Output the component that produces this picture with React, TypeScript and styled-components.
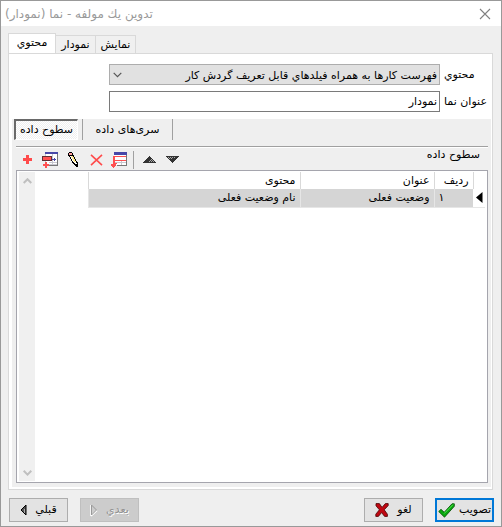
import React from "react";
import styled, { createGlobalStyle, css } from "styled-components";

const Global = createGlobalStyle`
  *, *::before, *::after { box-sizing: border-box; }
  html, body { margin: 0; padding: 0; background: #efefef; }
  button, input, select { font: inherit; color: inherit; margin: 0; border-radius: 0; }
`;

const Dialog = styled.main`
  display: flex;
  flex-direction: column;
  min-height: 100vh;
  border: 1px solid #999;
  background: #efefef;
  color: #000;
  font-family: "DejaVu Sans", Tahoma, sans-serif;
  font-size: 11px;
  line-height: 16px;
`;

const TitleBar = styled.header`
  display: flex;
  align-items: center;
  justify-content: space-between;
  height: 25px;
  padding: 0 8px 0 4px;
  background: #fff;
  color: #999;
`;

const Title = styled.h1`
  margin: 0;
  font-size: 12px;
  font-weight: 400;
`;

const CloseButton = styled.button`
  display: flex;
  padding: 2px;
  border: 0;
  background: none;
`;

const Tabs = styled.div`
  display: flex;
  align-items: flex-end;
  height: 27px;
  padding-left: 7px;
`;

const Tab = styled.button<{ $active?: boolean }>`
  width: 40px;
  height: 18px;
  padding: 0;
  border: 1px solid #d9d9d9;
  border-width: 1px 1px 0 0;
  background: #f0f0f0;
  white-space: nowrap;
  ${(p) =>
    p.$active &&
    css`
      width: 48px;
      height: 21px;
      padding-bottom: 3px;
      border-left-width: 1px;
      margin-bottom: -1px;
      background: #fff;
    `}
`;

const Page = styled.section`
  display: flex;
  flex: 1;
  flex-direction: column;
  margin: 0 8px 0 7px;
  padding: 10px 1px 2px 3px;
  border: 1px solid #d9d9d9;
  background: #fff;
`;

const Fields = styled.div`
  display: grid;
  grid-template-columns: 1fr 45px;
  gap: 6px 4px;
  margin: 0 2px 7px 97px;
`;

const Label = styled.label`
  align-self: center;
  white-space: nowrap;
`;

const Select = styled.select`
  width: 100%;
  height: 21px;
  padding: 2px 2px 0;
  appearance: none;
  border: 1px solid #adadad;
  background: #e1e1e1;
`;

const SelectBox = styled.div`
  position: relative;
  display: flex;
  svg {
    position: absolute;
    left: 4px;
    top: 8px;
    pointer-events: none;
  }
`;

const Input = styled.input`
  width: 100%;
  height: 21px;
  padding: 0 2px;
  border: 1px solid #7a7a7a;
  background: #fff;
`;

const Panel = styled.div`
  display: flex;
  flex: 1;
  flex-direction: column;
  padding: 0 3px 4px 4px;
  background: #efefef;
`;

const LevelTabs = styled.div`
  display: flex;
  height: 27px;
  margin-left: -2px;
`;

const LevelTab = styled.button<{ $pressed?: boolean }>`
  height: 21px;
  width: 90px;
  padding: 0;
  border: 0;
  border-right: 1px solid #a0a0a0;
  background: none;
  white-space: nowrap;
  ${(p) =>
    p.$pressed &&
    css`
      width: 64px;
      margin-right: 4px;
      border: 1px solid #fff;
      border-top: 2px solid #696969;
      border-left: 2px solid #696969;
      background: repeating-conic-gradient(#fff 0 25%, #efefef 0 50%) 0 0 / 2px 2px;
    `}
`;

const Divider = styled.span<{ $height: number }>`
  width: 1px;
  height: ${(p) => p.$height}px;
  background: #a0a0a0;
`;

const ToolRow = styled.div`
  display: flex;
  justify-content: space-between;
  height: 24px;
  padding-right: 8px;
  border-top: 1px solid #a0a0a0;
  box-shadow: inset 0 1px #fff;
`;

const Tools = styled.div`
  display: flex;
  align-items: center;
  padding-top: 2px;
`;

const ToolGroup = styled.div`
  display: flex;
  margin-right: 2px;
`;

const MoveGroup = styled.div`
  display: flex;
  margin-left: 4px;
`;

const ToolButton = styled.button`
  display: flex;
  align-items: center;
  justify-content: center;
  width: 23px;
  height: 22px;
  padding: 0;
  border: 0;
  background: none;
`;

const GridFrame = styled.div`
  display: flex;
  flex: 1;
  justify-content: space-between;
  align-items: stretch;
  padding: 1px 2px 1px 1px;
  border: 1px solid #a5a5ad;
  background: #fff;
`;

const ScrollTrack = styled.div`
  display: flex;
  flex-direction: column;
  justify-content: space-between;
  width: 16px;
  margin-left: 1px;
  background: #f0f0f0;
`;

const ScrollButton = styled.button`
  display: flex;
  align-items: center;
  justify-content: center;
  height: 17px;
  padding: 0;
  border: 0;
  background: none;
`;

const Table = styled.table`
  align-self: flex-start;
  table-layout: fixed;
  width: 397px;
  border-collapse: collapse;
`;

const Col = styled.col<{ $width: number }>`
  width: ${(p) => p.$width}px;
`;

const Th = styled.th`
  height: 17px;
  padding: 0 4px;
  border-left: 1px solid #d9d9d9;
  font-weight: 400;
  text-align: right;
`;

const Td = styled.td<{ $end?: boolean }>`
  height: 18px;
  padding: 1px 4px 0;
  border-left: 1px solid #e6e6e6;
  border-bottom: 1px solid #e6e6e6;
  background: #d5d5d5;
  text-align: ${(p) => (p.$end ? "left" : "right")};
`;

const Marker = styled.td`
  padding: 0 2px;
  border-bottom: 1px solid #e6e6e6;
  svg {
    display: block;
  }
`;

const Footer = styled.footer`
  display: flex;
  justify-content: space-between;
  padding: 8px 7px 4px 8px;
`;

const ButtonGroup = styled.div`
  display: flex;
  gap: 12px;
`;

const Button = styled.button<{ $primary?: boolean }>`
  display: flex;
  align-items: center;
  justify-content: center;
  gap: 8px;
  width: 59px;
  height: 24px;
  padding: 0;
  border: 1px solid #adadad;
  background: #e3e3e3;
  white-space: nowrap;
  &:disabled {
    border-color: #bfbfbf;
    background: #ccc;
    color: #929292;
    text-shadow: 1px 1px #fff;
  }
  ${(p) =>
    p.$primary &&
    css`
      gap: 4px;
      border: 2px solid #0078d7;
    `}
`;

const Chevron = ({ up = false, color = "#555" }: { up?: boolean; color?: string }) => (
  <svg width="9" height="6" viewBox="0 0 9 6" fill="none" stroke={color} strokeWidth={color === "#555" ? 1.2 : 2}>
    <path d={up ? "M.7 5 4.5 1.2 8.3 5" : "M.7.8l3.8 3.8L8.3.8"} />
  </svg>
);

const CloseIcon = () => (
  <svg width="12" height="12" viewBox="0 0 12 12" stroke="#808080" strokeWidth="1.1">
    <path d="M1 1l10 10M11 1L1 11" />
  </svg>
);

const PlusIcon = () => (
  <svg width="9" height="9" viewBox="0 0 9 9" fill="#ff4b4b">
    <path d="M3 0h3v3h3v3H6v3H3V6H0V3h3z" />
  </svg>
);

const InsertIcon = () => (
  <svg width="17" height="16" viewBox="0 0 17 16" shapeRendering="crispEdges">
    <path fill="#fff" d="M3 2h12v11H3z" />
    <path fill="#c8c8d0" d="M3 12h12v1H3zM7 10h8v1H7zM10 2h1v11h-1zM3 2h1v10H3z" />
    <path fill="#4848a8" d="M3 0h13v2H3z" />
    <path fill="#777" d="M15 2h1v12H7v-1h8z" />
    <path fill="#642e32" d="M0 4h10v5H0z" />
    <path fill="#ff5050" d="M1 5h8v3H1zM3 10h2v2h2v2H5v2H3v-2H1v-2h2z" />
    <path fill="#4848a8" d="M10 7h4v1h-4zM12 6h1v3h-1z" />
  </svg>
);

const PencilIcon = () => (
  <svg width="11" height="15" viewBox="0 0 11 15" shapeRendering="crispEdges">
    <path
      fill="#000"
      d="M1 0h3v1h1v2h1v2h1v2h1v2h1v1h1v5H8v-1H7v-1H6v-1H5v-1H4V9H3V7H2V5H1V4H0V1h1z"
    />
    <path fill="#ffe98e" d="M3 4h2v1h1v2h1v2h1v1H5V9H4V7H3V5h0z" />
    <path fill="#fff" d="M2 4h1v1h1v2h1v2h1v1H5V9H4V7H3V5H2z" />
    <path fill="#fff" d="M6 10h2v1h1v1H7v-1H6z" />
    <path fill="#ff9fa0" d="M1 1h3v2H1z" />
  </svg>
);

const DeleteIcon = () => (
  <svg width="13" height="12" viewBox="0 0 13 12" stroke="#ff4b4b" strokeWidth="1.6">
    <path d="M1 .8l11 10.4M12 .8L1 11.2" />
  </svg>
);

const DetailIcon = () => (
  <svg width="17" height="16" viewBox="0 0 17 16" shapeRendering="crispEdges">
    <path fill="#fff" d="M3 1h12v12H3z" />
    <path fill="#4848a8" d="M3 0h13v3H3z" />
    <path fill="#c8c8d0" d="M4 10h11v1H4zM10 9h1v4h-1z" />
    <path fill="#777" d="M15 3h1v11H6v-1h9z" />
    <path fill="#ff5050" d="M2 4h13v1H4v3h11v1H4v2h2v1H5v2H4v1H3v1H2v-1H1v-1H0v-2h2z" />
  </svg>
);

const MoveIcon = ({ down = false }: { down?: boolean }) => (
  <svg width="13" height="7" viewBox="0 0 13 7" shapeRendering="crispEdges">
    {down ? (
      <>
        <path fill="#333" d="M0 0h13v1h-1v1h-1v1h-1v1H9v1H8v1H7v1H6V6H5V5H4V4H3V3H2V2H1V1H0z" />
        <path fill="#aaa" d="M2 1h1v1H2zm2 0h1v1H4zm2 0h1v1H6zm2 0h1v1H8zm-5 1h1v1H3zm2 0h1v1H5z" />
      </>
    ) : (
      <>
        <path fill="#333" d="M6 0h1v1h1v1h1v1h1v1h1v1h1v1h1v1H0V6h1V5h1V4h1V3h1V2h1V1h1z" />
        <path fill="#aaa" d="M8 3h1v1H8zM7 4h1v1H7zm2 0h1v1H9zM6 5h1v1H6zm2 0h1v1H8zm2 0h1v1h-1z" />
      </>
    )}
  </svg>
);

const MarkerIcon = () => (
  <svg width="7" height="11" viewBox="0 0 7 11">
    <path d="M6.5 0v11L0 5.5z" />
  </svg>
);

const BackIcon = () => (
  <svg width="7" height="12" viewBox="0 0 7 12">
    <path fill="#555" stroke="#000" d="M6 1v10L1 6z" />
    <path stroke="#aaa" d="M4.5 5v4" />
  </svg>
);

const NextIcon = () => (
  <svg width="8" height="13" viewBox="0 0 8 13" fill="none">
    <path stroke="#fff" strokeWidth="1.5" d="M1 12l6-5.5M1 1v11" />
    <path stroke="#999" d="M1.5 1v10l5-5z" />
  </svg>
);

const CancelIcon = () => (
  <svg width="14" height="14" viewBox="0 0 14 14">
    <path
      fill="#c00812"
      stroke="#470000"
      strokeWidth=".8"
      d="M1 .6h3.4L7 4.4 10.4.6h2.8v2L9.2 6.8l3.2 4.4v2.2H9.6L6.6 9.6 3.4 13.4H.8v-2.2l3.6-4.4L1 2.8z"
    />
  </svg>
);

const OkIcon = () => (
  <svg width="17" height="15" viewBox="0 0 17 15">
    <path
      fill="#08a810"
      stroke="#004b00"
      strokeWidth=".8"
      d="M.7 8.5 3 6.3l3.2 3L14 .8h2.3v2.5L6.5 14.2z"
    />
    <path stroke="#55e850" strokeWidth="1" d="M6.2 10.5 15 1.6" />
  </svg>
);

const tools = [
  { name: "افزودن", icon: <PlusIcon /> },
  { name: "درج", icon: <InsertIcon /> },
  { name: "ویرایش", icon: <PencilIcon /> },
  { name: "حذف", icon: <DeleteIcon /> },
  { name: "افزودن جزء", icon: <DetailIcon /> },
];

export default function App() {
  return (
    <>
      <Global />
      <Dialog lang="fa">
        <TitleBar>
          <Title dir="rtl">تدوين يك مولفه - نما (نمودار)</Title>
          <CloseButton aria-label="بستن">
            <CloseIcon />
          </CloseButton>
        </TitleBar>

        <Tabs role="tablist">
          <Tab role="tab" aria-selected="true" $active>محتوي</Tab>
          <Tab role="tab" aria-selected="false">نمودار</Tab>
          <Tab role="tab" aria-selected="false">نمایش</Tab>
        </Tabs>

        <Page>
          <Fields>
            <SelectBox>
              <Select id="content" dir="rtl">
                <option>فهرست كارها به همراه فيلدهاي قابل تعريف گردش كار</option>
              </Select>
              <Chevron />
            </SelectBox>
            <Label htmlFor="content">محتوي</Label>
            <Input id="title" dir="rtl" defaultValue="نمودار" />
            <Label htmlFor="title">عنوان نما</Label>
          </Fields>

          <Panel>
            <LevelTabs role="tablist">
              <LevelTab role="tab" aria-selected="true" $pressed>سطوح داده</LevelTab>
              <Divider $height={21} />
              <LevelTab role="tab" aria-selected="false">سری‌های داده</LevelTab>
            </LevelTabs>

            <ToolRow>
              <Tools>
                <ToolGroup>
                  {tools.map((t) => (
                    <ToolButton key={t.name} aria-label={t.name}>{t.icon}</ToolButton>
                  ))}
                </ToolGroup>
                <Divider $height={18} />
                <MoveGroup>
                  <ToolButton aria-label="انتقال به بالا"><MoveIcon /></ToolButton>
                  <ToolButton aria-label="انتقال به پایین"><MoveIcon down /></ToolButton>
                </MoveGroup>
              </Tools>
              <span>سطوح داده</span>
            </ToolRow>

            <GridFrame>
              <ScrollTrack>
                <ScrollButton aria-label="بالا"><Chevron up color="#bfbfbf" /></ScrollButton>
                <ScrollButton aria-label="پایین"><Chevron color="#bfbfbf" /></ScrollButton>
              </ScrollTrack>
              <Table dir="rtl">
                <colgroup>
                  <Col $width={12} />
                  <Col $width={39} />
                  <Col $width={134} />
                  <Col $width={212} />
                </colgroup>
                <thead>
                  <tr>
                    <Th />
                    <Th>ردیف</Th>
                    <Th>عنوان</Th>
                    <Th>محتوی</Th>
                  </tr>
                </thead>
                <tbody>
                  <tr>
                    <Marker><MarkerIcon /></Marker>
                    <Td $end>۱</Td>
                    <Td>وضعیت فعلی</Td>
                    <Td>نام وضعیت فعلی</Td>
                  </tr>
                </tbody>
              </Table>
            </GridFrame>
          </Panel>
        </Page>

        <Footer>
          <ButtonGroup>
            <Button><BackIcon />قبلي</Button>
            <Button disabled><NextIcon />بعدي</Button>
          </ButtonGroup>
          <ButtonGroup>
            <Button><CancelIcon />لغو</Button>
            <Button $primary><OkIcon />تصویب</Button>
          </ButtonGroup>
        </Footer>
      </Dialog>
    </>
  );
}
